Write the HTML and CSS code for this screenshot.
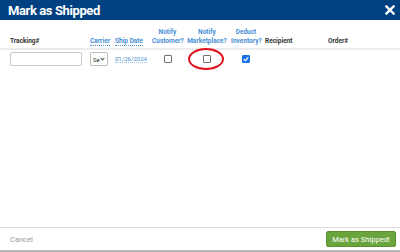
FILE: index.html
```html
<!DOCTYPE html>
<html lang="en">
<head>
    <meta charset="UTF-8">
    <title>Mark as Shipped</title>
    <link rel="stylesheet" href="styles.css">
</head>
<body>

<div id="modal">
    <div id="cabecalho">
        <h1 id="titulo">Mark as Shipped</h1>
        <span id="fechar">
            <svg width="10" height="10" viewBox="0 0 10 10"><path d="M1.5 1.5 L8.5 8.5 M8.5 1.5 L1.5 8.5" stroke="#fff" stroke-width="2.4" stroke-linecap="square"/></svg>
        </span>
    </div>

    <div id="corpo">
        <table id="envios">
            <thead>
                <tr>
                    <th class="col-tracking">Tracking#</th>
                    <th class="col-carrier"><span class="ordenar">Carrier</span></th>
                    <th class="col-date"><span class="ordenar">Ship Date</span></th>
                    <th class="col-customer centro"><span class="azul">Notify<br>Customer?</span></th>
                    <th class="col-market centro"><span class="azul">Notify<br>Marketplace?</span></th>
                    <th class="col-deduct centro"><span class="azul">Deduct<br>Inventory?</span></th>
                    <th class="col-recipient">Recipient</th>
                    <th>Order#</th>
                </tr>
            </thead>
            <tbody>
                <tr>
                    <td><input type="text" class="campo"></td>
                    <td><div class="transportadora">Se <span class="seta"></span></div></td>
                    <td><span class="data">01/26/2024</span></td>
                    <td class="centro"><span class="caixa"></span></td>
                    <td class="centro destaque-cel"><span class="caixa"></span><span class="circulo"></span></td>
                    <td class="centro"><span class="caixa marcada">
                        <svg width="6" height="6" viewBox="0 0 6 6"><path d="M0.8 3.2 L2.4 4.7 L5.2 1.3" fill="none" stroke="#fff" stroke-width="1.2"/></svg>
                    </span></td>
                    <td></td>
                    <td></td>
                </tr>
            </tbody>
        </table>
    </div>

    <div id="rodape">
        <a id="cancelar">Cancel</a>
        <button id="confirmar">Mark as Shipped!</button>
    </div>
</div>

</body>
</html>
```

FILE: styles.css
```css
* {
    box-sizing: border-box;
}

body {
    margin: 0;
    font-family: Roboto, "Liberation Sans", sans-serif;
    background-color: #fff;
}

#modal {
    width: 400px;
    height: 252px;
    display: flex;
    flex-direction: column;
    border-bottom: 2px solid #b5b5b5;
}

#cabecalho {
    background-color: #004181;
    height: 20px;
    display: flex;
    align-items: center;
    justify-content: space-between;
    padding: 0 5px 0 8px;
}

#titulo {
    margin: 0;
    color: #fff;
    font-size: 13px;
    font-weight: 700;
    letter-spacing: -0.4px;
}

#fechar {
    display: flex;
}

#corpo {
    flex-grow: 1;
    padding-top: 8px;
}

#envios {
    width: 100%;
    table-layout: fixed;
    border-collapse: collapse;
    font-size: 6.5px;
}

#envios th {
    font-weight: 700;
    color: #333;
    text-align: left;
    vertical-align: bottom;
    padding: 0 2px 2px;
    line-height: 9px;
    border-bottom: 2px solid #ececec;
}

#envios td {
    padding: 2px 2px;
    vertical-align: middle;
}

#envios th:first-child,
#envios td:first-child {
    padding-left: 10px;
}

.col-tracking { width: 88px; }
.col-carrier { width: 25px; }
.col-date { width: 37px; }
.col-customer { width: 35px; }
.col-market { width: 44px; }
.col-deduct { width: 34px; }
.col-recipient { width: 63px; }

#envios .centro {
    text-align: center;
}

.ordenar {
    color: #4a8fd6;
    border-bottom: 1px dotted #4a8fd6;
}

.azul {
    color: #4a8fd6;
}

.campo {
    display: block;
    width: 72px;
    height: 14px;
    border: 1px solid #c8c8c8;
    border-radius: 2px;
    margin: 0;
}

.transportadora {
    width: 18px;
    height: 14px;
    border: 1px solid #bdbdbd;
    border-radius: 2px;
    font-size: 6px;
    color: #333;
    display: flex;
    align-items: center;
    padding-left: 2px;
    gap: 1px;
}

.seta {
    width: 3px;
    height: 3px;
    border-right: 1px solid #444;
    border-bottom: 1px solid #444;
    transform: rotate(45deg);
    margin-top: -2px;
}

.data {
    color: #4a8fd6;
    font-size: 6px;
    border-bottom: 1px dotted #9cc2ea;
}

.destaque-cel {
    position: relative;
}

.caixa {
    display: inline-block;
    width: 8px;
    height: 8px;
    border: 1px solid #6f6f6f;
    border-radius: 1px;
    vertical-align: middle;
}

.caixa.marcada {
    background-color: #1a73e8;
    border-color: #1a73e8;
    position: relative;
}

.caixa.marcada svg {
    position: absolute;
    left: 0;
    top: 0;
}

.circulo {
    position: absolute;
    left: 3px;
    top: -2px;
    width: 36px;
    height: 22px;
    border: 2px solid #e0141e;
    border-radius: 50%;
}

#rodape {
    border-top: 1px solid #dcdcdc;
    height: 23px;
    display: flex;
    align-items: center;
    justify-content: space-between;
    padding: 0 4px 0 10px;
}

#cancelar {
    color: #9a9a9a;
    font-size: 7.5px;
}

#confirmar {
    background-color: #6aa43c;
    color: #fff;
    border: 1px solid #5b9231;
    border-radius: 2px;
    font-family: Roboto, "Liberation Sans", sans-serif;
    font-size: 7.5px;
    height: 16px;
    width: 70px;
    padding: 0;
}
```
